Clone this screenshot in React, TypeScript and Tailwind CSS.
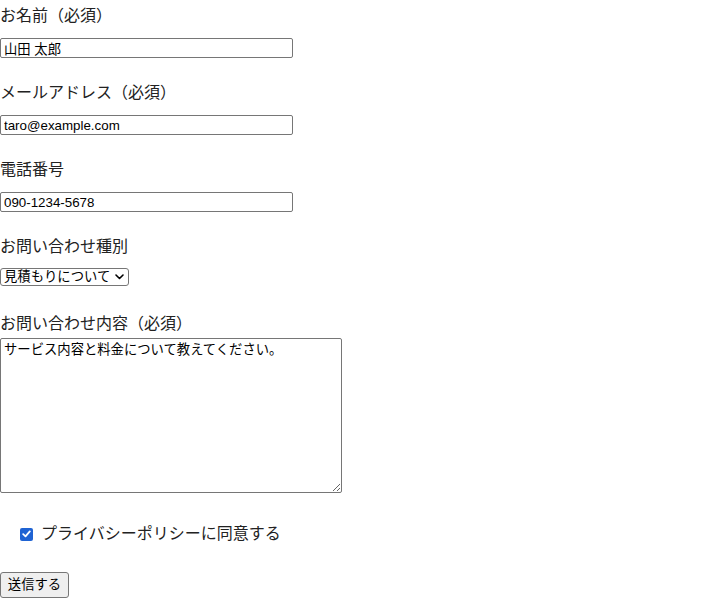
import React from "react";

const labelCls = "h-6 leading-6 text-[16px] text-[#222]";
const inputCls =
  "block mt-[10px] h-5 w-[293px] border border-[#767676] rounded-[2px] px-[3px] py-0 text-[13.33px] leading-[18px] text-black bg-white outline-none font-['Liberation_Sans','Noto_Sans_CJK_JP',sans-serif]";

export default function App() {
  return (
    <div className="font-['Liberation_Sans','Noto_Sans_CJK_JP',sans-serif] bg-white min-h-[600px] w-[720px]">
      <form className="flex flex-col items-start" onSubmit={(e) => e.preventDefault()}>
        <div className="pt-[4px] mb-[19px]">
          <label className={labelCls + " block"}>お名前（必須）</label>
          <input className={inputCls} type="text" defaultValue="山田 太郎" />
        </div>
        <div className="pt-[4px] mb-[19px]">
          <label className={labelCls + " block"}>メールアドレス（必須）</label>
          <input className={inputCls} type="email" defaultValue="taro@example.com" />
        </div>
        <div className="pt-[4px] mb-[19px]">
          <label className={labelCls + " block"}>電話番号</label>
          <input className={inputCls} type="tel" defaultValue="090-1234-5678" />
        </div>
        <div className="pt-[4px] mb-[19px]">
          <label className={labelCls + " block"}>お問い合わせ種別</label>
          <div className="mt-[9px] h-[21px]">
            <div className="relative w-[129px] h-[18px]">
              <select
                className="appearance-none block w-[129px] h-[18px] border border-[#767676] rounded-[3px] pl-[3px] pr-4 py-0 text-[13.33px] leading-[16px] text-black bg-white outline-none font-['Liberation_Sans','Noto_Sans_CJK_JP',sans-serif]"
                defaultValue="estimate"
              >
                <option value="estimate">見積もりについて</option>
                <option value="service">サービスについて</option>
                <option value="other">その他</option>
              </select>
              <svg
                className="absolute right-[5px] top-[6px] pointer-events-none"
                width="9"
                height="6"
                viewBox="0 0 9 6"
              >
                <path d="M1 1 L4.5 4.5 L8 1" fill="none" stroke="#000" strokeWidth="1.6" strokeLinecap="round" strokeLinejoin="round" />
              </svg>
            </div>
          </div>
        </div>
        <div className="pt-[4px]">
          <label className={labelCls + " block"}>お問い合わせ内容（必須）</label>
          <textarea
            className="block mt-[2px] h-[155px] w-[342px] border border-[#767676] rounded-[2px] px-[3px] py-[2px] text-[13.33px] leading-[18px] text-black bg-white outline-none font-['Liberation_Sans','Noto_Sans_CJK_JP',sans-serif]"
            defaultValue="サービス内容と料金について教えてください。"
          />
        </div>
        <label className="mt-[29px] ml-5 flex items-center h-6 text-[16px] text-[#222]">
          <span className="w-[13px] h-[13px] rounded-[2px] bg-[#1f63d3] flex items-center justify-center mr-2">
            <svg width="9" height="8" viewBox="0 0 9 8">
              <path d="M1.2 4.2 L3.5 6.3 L7.8 1.4" fill="none" stroke="#fff" strokeWidth="1.8" strokeLinecap="round" strokeLinejoin="round" />
            </svg>
          </span>
          プライバシーポリシーに同意する
        </label>
        <button
          type="submit"
          className="mt-[26px] h-[26px] w-[69px] border border-[#767676] rounded-[3px] bg-[#efefef] text-[13.33px] text-black flex items-center justify-center font-['Liberation_Sans','Noto_Sans_CJK_JP',sans-serif]"
        >
          送信する
        </button>
      </form>
    </div>
  );
}
